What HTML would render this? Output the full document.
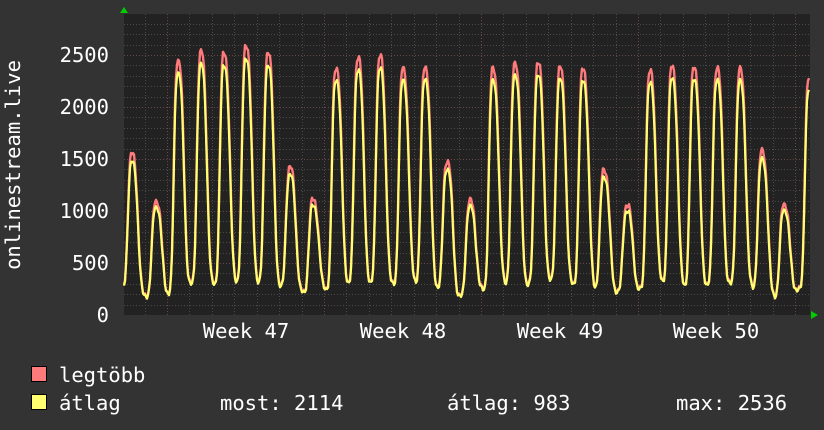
<!DOCTYPE html>
<html><head><meta charset="utf-8"><style>
html,body{margin:0;padding:0;background:#333;}
body{width:824px;height:430px;overflow:hidden;position:relative;font-family:"DejaVu Sans Mono","Liberation Mono",monospace;color:#fff;}
svg{position:absolute;left:0;top:0;}
text{font-family:"DejaVu Sans Mono","Liberation Mono",monospace;font-size:20.5px;fill:#fff;}
</style></head><body>
<svg id="g" width="824" height="430" xmlns="http://www.w3.org/2000/svg">
<rect x="0" y="0" width="824" height="430" fill="#333"/>
<rect x="124" y="14" width="686" height="301" fill="#222"/>
<g id="grid"></g>
<polyline id="mx" fill="none" stroke="#ff7b7b" stroke-width="2.4" stroke-linejoin="round"/>
<polyline id="av" fill="none" stroke="#ffff70" stroke-width="2.2" stroke-linejoin="round"/>
<polygon points="120,13 128,13 124,7" fill="#0c0"/>
<polygon points="811,311 811,319 818,315" fill="#0c0"/>
<g text-anchor="end">
<text x="109" y="322">0</text>
<text x="109" y="270">500</text>
<text x="109" y="218">1000</text>
<text x="109" y="166">1500</text>
<text x="109" y="114">2000</text>
<text x="109" y="62">2500</text>
</g>
<g text-anchor="middle">
<text x="246" y="338">Week 47</text>
<text x="403" y="338">Week 48</text>
<text x="560" y="338">Week 49</text>
<text x="716" y="338">Week 50</text>
</g>
<text transform="translate(20,165) rotate(-90)" text-anchor="middle">onlinestream.live</text>
<rect x="31.5" y="366.5" width="15" height="15" fill="#ff7b7b" stroke="#000"/>
<rect x="31.5" y="394.5" width="15" height="15" fill="#ffff70" stroke="#000"/>
<text x="59" y="382">legtöbb</text>
<text x="59" y="410">átlag</text>
<text x="220" y="410">most: 2114</text>
<text x="447" y="410">átlag: 983</text>
<text x="676" y="410">max: 2536</text>
</svg>
<script>
var ns="http://www.w3.org/2000/svg",g=document.getElementById('grid');
function ln(x1,y1,x2,y2,c){var l=document.createElementNS(ns,'line');l.setAttribute('x1',x1);l.setAttribute('y1',y1);l.setAttribute('x2',x2);l.setAttribute('y2',y2);l.setAttribute('stroke',c);l.setAttribute('stroke-width',1);l.setAttribute('stroke-dasharray','1,2');l.setAttribute('shape-rendering','crispEdges');g.appendChild(l);}
for(var v=100;v<=2800;v+=100){var y=Math.round(315-v*0.104)+0.5;if(y<14)break;ln(124,y,810,y,v%500==0?'#6a4848':'#4a4a4a');}
for(var x=167-22.43*2;x<810;x+=22.43){if(x<124)continue;var xx=Math.round(x)+0.5;var m=((xx-167)%157+157)%157;var wk=m<3||m>154;ln(xx,14,xx,315,wk?'#6a4848':'#4a4a4a');}
var peaks=[[132,1550],[156,1100],[178,2450],[201,2530],[224,2520],[246,2600],[268,2530],[290,1420],[313,1110],[336,2380],[358,2480],[380,2490],[403,2370],[425,2390],[447,1480],[470,1100],[493,2370],[515,2430],[538,2430],[560,2380],[583,2370],[604,1400],[627,1060],[650,2340],[672,2390],[694,2390],[717,2380],[740,2360],[762,1580],[784,1070],[809,2280]];
var lows=[270,190,210,300,300,330,320,270,220,260,310,300,300,330,270,180,250,320,300,330,300,270,230,250,320,290,300,300,270,190,250];
var mx=[],av=[];
function Y(v){return (315-v*0.104).toFixed(1);}
for(var x=124;x<=809;x++){
 var best=0,bi=0;
 for(var i=0;i<peaks.length;i++){
  var d=x-peaks[i][0];var s=d<0?5:7;
  var f=Math.exp(-Math.pow(Math.abs(d)/s,3));
  if(f*peaks[i][1]>best){best=f*peaks[i][1];bi=i;}
 }
 var p=peaks[bi];var d=x-p[0];var s=d<0?5:7;var f=Math.exp(-Math.pow(Math.abs(d)/s,3));
 var low=lows[d<0?bi:Math.min(bi+1,lows.length-1)];
 var v=low+(p[1]-low)*f;
 var nz=Math.sin(x*1.7)*20+Math.sin(x*0.63)*15;
 mx.push(x+','+Y(Math.max(150,v+nz)));
 var a=v>600?v*0.955-10:v*0.97;
 av.push(x+','+Y(Math.max(140,a+nz*0.8)));
}
document.getElementById('mx').setAttribute('points',mx.join(' '));
document.getElementById('av').setAttribute('points',av.join(' '));
</script>
</body></html>
